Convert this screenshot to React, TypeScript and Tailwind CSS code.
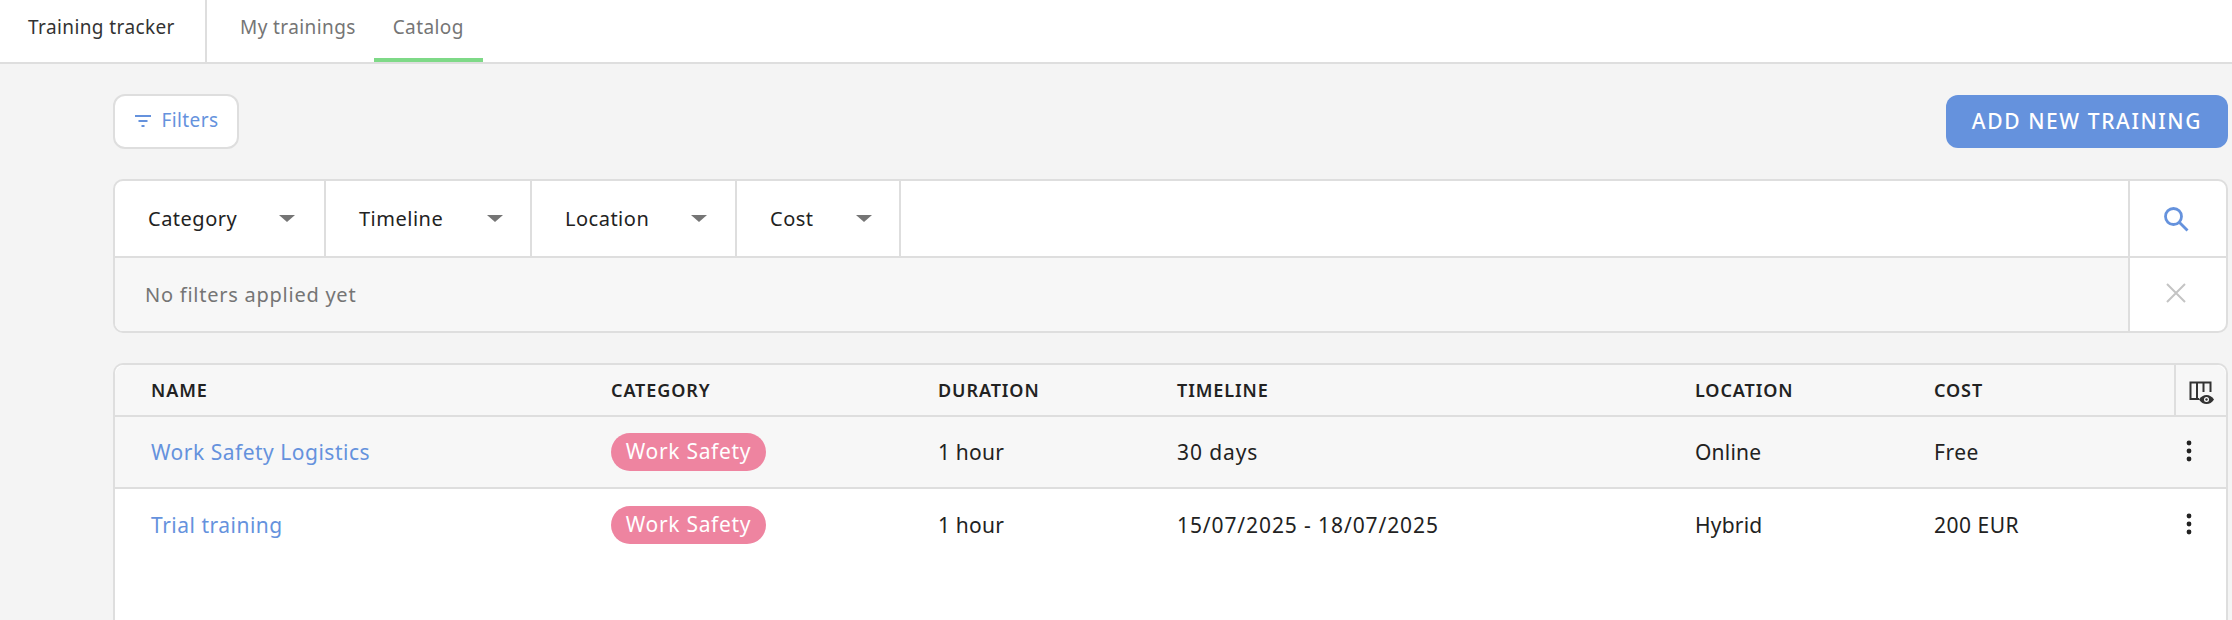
const TRAININGS = [
  { name: "Work Safety Logistics", timeline: "30 days", location: "Online", cost: "Free" },
  { name: "Trial training", timeline: "15/07/2025 - 18/07/2025", location: "Hybrid", cost: "200 EUR" },
];

const FILTERS = [
  { label: "Category", width: "w-[211px]", gap: "pr-[29px]" },
  { label: "Timeline", width: "w-[206px]", gap: "pr-[27px]" },
  { label: "Location", width: "w-[205px]", gap: "pr-[28px]" },
  { label: "Cost", width: "w-[164px]", gap: "pr-[27px]" },
];

function FilterIcon() {
  return (
    <svg width="18" height="14" viewBox="0 0 18 14" fill="none" stroke="#6592dd" strokeWidth="2">
      <path d="M1 2h16M4.500 7h9M7.500 12h3" />
    </svg>
  );
}

function SearchIcon() {
  return (
    <svg width="28" height="28" viewBox="0 0 28 28" fill="none" stroke="#6592dd" strokeWidth="2.800">
      <circle cx="11.500" cy="11.500" r="8" />
      <path d="M17.500 17.500l8 8" />
    </svg>
  );
}

function CloseIcon() {
  return (
    <svg width="20" height="20" viewBox="0 0 20 20" fill="none" stroke="#c4c4c4" strokeWidth="2">
      <path d="M1 1l18 18M19 1L1 19" />
    </svg>
  );
}

function ColumnsIcon() {
  return (
    <svg width="26" height="26" viewBox="0 0 26 26" fill="none">
      <path d="M11 19H2.500V2.500h20V12M9 2.500V19M15.500 2.500V12" stroke="#333" strokeWidth="2" />
      <path d="M11 19.500c2-3 4.500-4.500 7.500-4.500s5.500 1.500 7.500 4.500c-2 3-4.500 4.500-7.500 4.500s-5.500-1.500-7.500-4.500z" fill="#333" />
      <circle cx="18.500" cy="19.500" r="2.500" fill="#fff" />
      <circle cx="18.500" cy="19.500" r="1.200" fill="#333" />
    </svg>
  );
}

function KebabIcon() {
  return (
    <svg width="6" height="22" viewBox="0 0 6 22" fill="#222">
      <circle cx="3" cy="3" r="2.400" />
      <circle cx="3" cy="11" r="2.400" />
      <circle cx="3" cy="19" r="2.400" />
    </svg>
  );
}

function Caret() {
  return <span className="h-0 w-0 border-x-[8px] border-t-[7px] border-x-transparent border-t-[#757575]" />;
}

export default function App() {
  return (
    <div className="flex h-[620px] w-[2232px] flex-col overflow-hidden bg-[#f4f4f4] font-['Noto_Sans',sans-serif] text-[20px] tracking-[0.500px] text-[#222]">
      {/* Nav */}
      <header className="flex h-[64px] flex-none border-b-2 border-[#dedede] bg-white">
        <div className="flex w-[207px] items-center border-r-2 border-[#dedede] pb-[8px] pl-[28px] text-[19px] tracking-[0.400px] text-[#333]">
          Training tracker
        </div>
        <div className="flex pl-[33px] text-[19px] tracking-[0.400px] text-[#757575]">
          <div className="flex items-center pb-[8px]">My trainings</div>
          <div className="ml-[18px] flex w-[109px] items-center justify-center border-b-[4px] border-[#7ed987] pb-[4px]">
            Catalog
          </div>
        </div>
      </header>

      <main className="flex flex-1 flex-col pl-[113px] pr-[4px]">
        <div className="mt-[30px] flex items-start justify-between">
          <button
            type="button"
            className="flex h-[55px] w-[126px] items-center justify-center gap-[10px] rounded-[12px] border-2 border-[#dedede] bg-white pb-[2px] text-[19px] tracking-[0.400px] text-[#6592dd]"
          >
            <FilterIcon />
            Filters
          </button>
          <button
            type="button"
            className="mt-[1px] h-[53px] w-[282px] rounded-[12px] bg-[#6592dd] text-[21px] font-medium tracking-[1.600px] text-white"
          >
            ADD NEW TRAINING
          </button>
        </div>

        {/* Filter bar */}
        <section className="mt-[30px] flex flex-none flex-col overflow-hidden rounded-[10px] border-2 border-[#dedede] bg-white">
          <div className="flex h-[77px] border-b-2 border-[#dedede]">
            {FILTERS.map((f) => (
              <div
                key={f.label}
                className={`flex items-center justify-between border-r-2 border-[#dedede] pl-[33px] ${f.width} ${f.gap}`}
              >
                {f.label}
                <Caret />
              </div>
            ))}
            <div className="flex-1" />
            <div className="flex w-[98px] items-center justify-center border-l-2 border-[#dedede] pr-[4px]">
              <SearchIcon />
            </div>
          </div>
          <div className="flex h-[73px]">
            <div className="flex flex-1 items-center bg-[#f7f7f7] pl-[30px] tracking-[0.750px] text-[#757575]">
              No filters applied yet
            </div>
            <div className="flex w-[98px] items-center justify-center border-l-2 border-[#dedede] pb-[4px] pr-[4px]">
              <CloseIcon />
            </div>
          </div>
        </section>

        {/* Table */}
        <section className="mt-[30px] flex flex-1 flex-col rounded-t-[10px] border-x-2 border-t-2 border-[#dedede] bg-white">
          <div className="flex h-[52px] flex-none items-center rounded-t-[10px] border-b-2 border-[#dedede] bg-[#f7f7f7] pl-[36px] text-[18px] font-semibold tracking-[0.900px]">
            <div className="w-[460px]">NAME</div>
            <div className="w-[327px]">CATEGORY</div>
            <div className="w-[239px]">DURATION</div>
            <div className="w-[518px]">TIMELINE</div>
            <div className="w-[239px]">LOCATION</div>
            <div className="flex-1">COST</div>
            <div className="flex h-full w-[52px] items-center justify-center border-l-2 border-[#dedede] pt-[5px]">
              <ColumnsIcon />
            </div>
          </div>
          {TRAININGS.map((t, i) => (
            <div
              key={t.name}
              className={`flex h-[72px] flex-none items-center pl-[36px] text-[21px] ${i === 0 ? "border-b-2 border-[#dedede] bg-[#f7f7f7]" : ""}`}
            >
              <div className="w-[460px] pt-[1px] text-[#6592dd]">{t.name}</div>
              <div className="w-[327px]">
                <span className="inline-flex h-[38px] w-[155px] items-center justify-center rounded-full bg-[#ee84a0] tracking-[0.700px] text-white">
                  Work Safety
                </span>
              </div>
              <div className="w-[239px] pt-[1px] tracking-[0.200px]">1 hour</div>
              <div className="w-[518px] pt-[1px] tracking-[0.900px]">{t.timeline}</div>
              <div className="w-[239px] pt-[1px] tracking-[0.200px]">{t.location}</div>
              <div className="flex-1 pt-[1px]">{t.cost}</div>
              <div className="flex w-[52px] justify-center pb-[2px] pr-[22px]">
                <KebabIcon />
              </div>
            </div>
          ))}
        </section>
      </main>
    </div>
  );
}
